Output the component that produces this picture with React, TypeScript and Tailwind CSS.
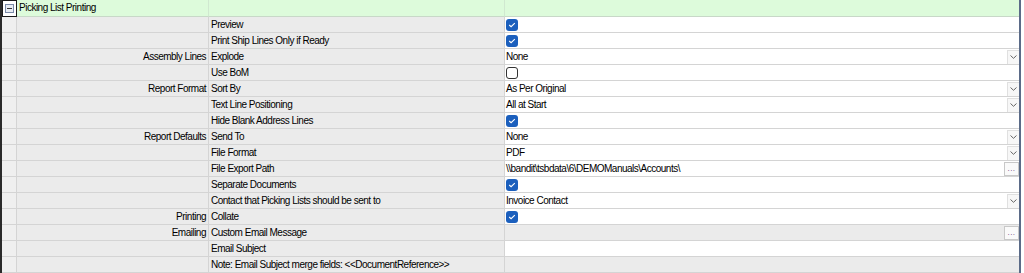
import React from 'react';

type Row = {
  category?: string;
  label: string;
  kind: 'check' | 'uncheck' | 'select' | 'text' | 'browse' | 'blank' | 'gray' | 'grayBrowse';
  value?: string;
};

const rows: Row[] = [
  { label: 'Preview', kind: 'check' },
  { label: 'Print Ship Lines Only if Ready', kind: 'check' },
  { category: 'Assembly Lines', label: 'Explode', kind: 'select', value: 'None' },
  { label: 'Use BoM', kind: 'uncheck' },
  { category: 'Report Format', label: 'Sort By', kind: 'select', value: 'As Per Original' },
  { label: 'Text Line Positioning', kind: 'select', value: 'All at Start' },
  { label: 'Hide Blank Address Lines', kind: 'check' },
  { category: 'Report Defaults', label: 'Send To', kind: 'select', value: 'None' },
  { label: 'File Format', kind: 'select', value: 'PDF' },
  { label: 'File Export Path', kind: 'browse', value: '\\\\bandit\\tsbdata\\6\\DEMOManuals\\Accounts\\' },
  { label: 'Separate Documents', kind: 'check' },
  { label: 'Contact that Picking Lists should be sent to', kind: 'select', value: 'Invoice Contact' },
  { category: 'Printing', label: 'Collate', kind: 'check' },
  { category: 'Emailing', label: 'Custom Email Message', kind: 'grayBrowse' },
  { label: 'Email Subject', kind: 'blank' },
  { label: 'Note: Email Subject merge fields: <<DocumentReference>>', kind: 'gray' },
];

function CheckBox({ checked }: { checked: boolean }) {
  if (!checked) {
    return <div className="w-[12px] h-[12px] rounded-[3px] border border-[#333] bg-white" />;
  }
  return (
    <div className="w-[12px] h-[12px] rounded-[3px] bg-[#1b5fbd] flex items-center justify-center">
      <svg width="8" height="6" viewBox="0 0 8 6">
        <path d="M1.2 3 L3.1 4.7 L6.8 1.2" stroke="#fff" strokeWidth="1.1" fill="none" />
      </svg>
    </div>
  );
}

function DropButton() {
  return (
    <div className="ml-auto w-[12px] h-[14px] bg-[#f7f7f7] border-l border-t border-[#e0e0e0] flex items-center justify-center">
      <svg width="7" height="4" viewBox="0 0 7 4">
        <path d="M0.5 0.5 L3.5 3.3 L6.5 0.5" stroke="#666" strokeWidth="1" fill="none" />
      </svg>
    </div>
  );
}

function EllipsisButton() {
  return (
    <div className="ml-auto w-[15px] h-[14px] bg-[#fafafa] border border-[#c8c8c8] flex items-end justify-center pb-[2px]">
      <span className="text-[8px] leading-none tracking-[0.5px] text-[#6a3a7a]">...</span>
    </div>
  );
}

function ValueCell({ row }: { row: Row }) {
  const gray = row.kind === 'gray' || row.kind === 'grayBrowse';
  return (
    <div className={`flex items-center pl-px h-full border-b border-[#d4d4d4] ${gray ? 'bg-[#ebebeb]' : 'bg-white'}`}>
      {row.kind === 'check' && <CheckBox checked />}
      {row.kind === 'uncheck' && <CheckBox checked={false} />}
      {(row.kind === 'select' || row.kind === 'browse') && <span className="whitespace-nowrap">{row.value}</span>}
      {row.kind === 'select' && <DropButton />}
      {(row.kind === 'browse' || row.kind === 'grayBrowse') && <EllipsisButton />}
    </div>
  );
}

export default function App() {
  return (
    <div className="w-[1024px] h-[273px] bg-white overflow-hidden text-[10px] tracking-[-0.5px] text-black font-['Liberation_Sans',Arial,sans-serif] leading-none">
      <div className="flex w-[1021px] border-r-2 border-[#5b6b88]">
        <div className="w-[1019px] border-l-2 border-[#2a2a2a]">
          {/* Group header */}
          <div className="grid grid-cols-[15px_192px_296px_1fr] h-[17px]">
            <div className="border border-[#1a1a1a] flex items-center justify-center bg-white">
              <div className="w-[9px] h-[9px] border border-[#7a8aa8] bg-[#e8ecf3] flex items-center justify-center">
                <div className="w-[5px] h-px bg-[#333]" />
              </div>
            </div>
            <div className="bg-[#ddfbdb] border-b border-[#c8d8c8] border-r border-r-[#d0e8d0] flex items-center pl-[2px] overflow-visible whitespace-nowrap relative z-10">
              Picking List Printing
            </div>
            <div className="bg-[#ddfbdb] border-b border-[#c8d8c8] border-r border-r-[#d0e8d0]" />
            <div className="bg-[#ddfbdb] border-b border-[#c8d8c8]" />
          </div>
          {rows.map((row, i) => (
            <div key={i} className="grid grid-cols-[15px_192px_296px_1fr] h-[16px]">
              <div className="bg-[#efefef] border-r border-b border-[#d4d4d4]" />
              <div className="bg-[#ebebeb] border-r border-b border-[#d4d4d4] flex items-center justify-end pr-[2px] whitespace-nowrap">
                {row.category}
              </div>
              <div className="bg-[#ebebeb] border-r border-b border-[#d4d4d4] flex items-center pl-[2px] whitespace-nowrap overflow-hidden">
                {row.label}
              </div>
              <ValueCell row={row} />
            </div>
          ))}
          <div className="h-px bg-[#ddfbdb]" />
        </div>
      </div>
    </div>
  );
}
